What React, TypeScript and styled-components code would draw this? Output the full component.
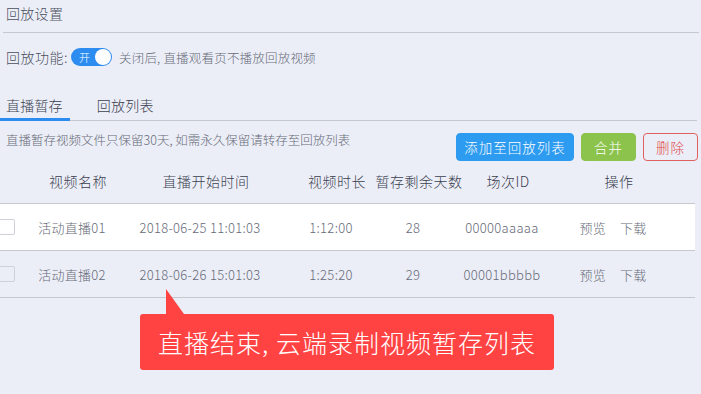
import React from 'react';
import styled, { createGlobalStyle } from 'styled-components';

type Video = {
	id: string;
	name: string;
	start: string;
	duration: string;
	daysLeft: number;
	highlighted: boolean;
};

const videos: Video[] = [
	{ id: '00000aaaaa', name: '活动直播01', start: '2018-06-25 11:01:03', duration: '1:12:00', daysLeft: 28, highlighted: true },
	{ id: '00001bbbbb', name: '活动直播02', start: '2018-06-26 15:01:03', duration: '1:25:20', daysLeft: 29, highlighted: false },
];

const columns = ['视频名称', '直播开始时间', '视频时长', '暂存剩余天数', '场次ID', '操作'];

const App: React.FC = () => {
	return (
		<Page>
			<GlobalStyle />
			<Header>
				<Title>回放设置</Title>
			</Header>
			<SwitchRow>
				<SwitchLabel>回放功能:</SwitchLabel>
				<Switch>
					<SwitchText>开</SwitchText>
					<Knob />
				</Switch>
				<SwitchHint>关闭后, 直播观看页不播放回放视频</SwitchHint>
			</SwitchRow>
			<Tabs>
				<Tab active>直播暂存</Tab>
				<Tab>回放列表</Tab>
			</Tabs>
			<Toolbar>
				<Note>直播暂存视频文件只保留30天, 如需永久保留请转存至回放列表</Note>
				<Actions>
					<Button kind="primary" width={118}>添加至回放列表</Button>
					<Button kind="success" width={55}>合并</Button>
					<Button kind="danger" width={55}>删除</Button>
				</Actions>
			</Toolbar>
			<Table>
				<HeadRow>
					<span />
					{columns.map((c) => (
						<HeadCell key={c}>{c}</HeadCell>
					))}
				</HeadRow>
				{videos.map((v) => (
					<BodyRow key={v.id} highlighted={v.highlighted}>
						<CheckCell>
							<Checkbox />
						</CheckCell>
						<Cell>{v.name}</Cell>
						<Cell>{v.start}</Cell>
						<Cell>{v.duration}</Cell>
						<Cell>{v.daysLeft}</Cell>
						<Cell>{v.id}</Cell>
						<Cell>
							<OpLink>预览</OpLink>
							<OpLink>下载</OpLink>
						</Cell>
					</BodyRow>
				))}
			</Table>
			<Callout>
				<CalloutText>直播结束, 云端录制视频暂存列表</CalloutText>
			</Callout>
		</Page>
	);
};

export default App;

const GlobalStyle = createGlobalStyle`
	html, body {
		margin: 0;
		padding: 0;
		background: #eceef7;
	}
	body {
		font-family: "Noto Sans CJK SC", "Noto Sans", sans-serif;
		font-weight: 300;
	}
`;

const Page = styled.div`
	position: relative;
	width: 701px;
	height: 394px;
	overflow: hidden;
	background: #eceef7;
	color: #4a5060;
`;

const Header = styled.div`
	margin: 0 2px 0 3px;
	padding: 3px 0 0 3px;
	height: 29px;
	border-bottom: 1px solid #c6c8ce;
`;

const Title = styled.div`
	font-size: 14px;
	line-height: 20px;
	letter-spacing: 0.3px;
	color: #4a5060;
`;

const SwitchRow = styled.div`
	display: flex;
	align-items: center;
	margin-top: 15px;
	padding-left: 6px;
	height: 18px;
`;

const SwitchLabel = styled.span`
	font-size: 14px;
	letter-spacing: 0.5px;
	color: #4a5060;
	margin-right: 3px;
`;

const Switch = styled.div`
	display: flex;
	align-items: center;
	justify-content: space-between;
	width: 41px;
	height: 18px;
	box-sizing: border-box;
	padding: 0 1px 0 8px;
	border-radius: 9px;
	background: #2d8cf0;
`;

const SwitchText = styled.span`
	font-size: 11px;
	color: #fff;
	line-height: 18px;
`;

const Knob = styled.span`
	width: 16px;
	height: 16px;
	border-radius: 50%;
	background: #fff;
`;

const SwitchHint = styled.span`
	margin-left: 7px;
	font-size: 12.5px;
	letter-spacing: 0.2px;
	color: #666b78;
`;

const Tabs = styled.div`
	display: flex;
	gap: 21px;
	margin: 29px 4px 0 0;
	border-bottom: 1px solid #c6c8ce;
`;

const Tab = styled.div<{ active?: boolean }>`
	padding: 0 7px 3px 6px;
	margin-bottom: -1px;
	font-size: 14px;
	line-height: 20px;
	letter-spacing: 0.2px;
	color: #3a4050;
	border-bottom: 3px solid ${(p) => (p.active ? '#2d8cf0' : 'transparent')};
`;

const Toolbar = styled.div`
	display: flex;
	align-items: flex-start;
	justify-content: space-between;
	margin-top: 12px;
	padding: 0 3px 0 6px;
`;

const Note = styled.div`
	font-size: 12.5px;
	line-height: 14px;
	color: #666b78;
`;

const Actions = styled.div`
	display: flex;
	gap: 7px;
`;

const buttonColors = {
	primary: { bg: '#2d9bf0', border: '#2d9bf0', color: '#fff' },
	success: { bg: '#8cc34d', border: '#8cc34d', color: '#fff' },
	danger: { bg: 'transparent', border: '#e06060', color: '#e04848' },
};

const Button = styled.button<{ kind: keyof typeof buttonColors; width: number }>`
	width: ${(p) => p.width}px;
	height: 28px;
	padding: 0;
	border-radius: 4px;
	border: 1px solid ${(p) => buttonColors[p.kind].border};
	background: ${(p) => buttonColors[p.kind].bg};
	color: ${(p) => buttonColors[p.kind].color};
	font-family: "Noto Sans CJK SC", "Noto Sans", sans-serif;
	font-weight: 300;
	font-size: 13.5px;
	letter-spacing: 1px;
`;

const Table = styled.div`
	margin-right: 6px;
`;

const grid = `
	display: grid;
	grid-template-columns: 20px 104px 152px 110px 54px 124px 98px 1fr;
	align-items: center;
`;

const HeadRow = styled.div`
	${grid};
	height: 43px;
	box-sizing: border-box;
	padding: 0 0 2px 6px;
	border-bottom: 1px solid #c6c8ce;
`;

const HeadCell = styled.div`
	display: flex;
	justify-content: center;
	white-space: nowrap;
	font-size: 14px;
	letter-spacing: 0.5px;
	color: #3a4050;
`;

const BodyRow = styled.div<{ highlighted: boolean }>`
	${grid};
	height: 47px;
	box-sizing: border-box;
	border-bottom: 1px solid #c6c8ce;
	background: ${(p) => (p.highlighted ? '#fff' : 'transparent')};
`;

const CheckCell = styled.div`
	display: flex;
	align-items: center;
`;

const Checkbox = styled.span`
	width: 16px;
	height: 16px;
	box-sizing: border-box;
	margin-left: -1px;
	border: 1px solid #cfd1d8;
	border-radius: 2px;
	background: transparent;
`;

const Cell = styled.div`
	display: flex;
	justify-content: center;
	gap: 14px;
	white-space: nowrap;
	font-size: 13px;
	letter-spacing: 0.3px;
	color: #666b78;
`;

const OpLink = styled.span`
	color: #666b78;
`;

const Callout = styled.div`
	position: absolute;
	left: 140px;
	top: 314px;
	width: 414px;
	height: 56px;
	display: flex;
	align-items: center;
	justify-content: center;
	border-radius: 3px;
	background: #ff4343;
	&::before {
		content: '';
		position: absolute;
		left: 26px;
		top: -25px;
		border-left: 0 solid transparent;
		border-right: 18px solid transparent;
		border-bottom: 25px solid #ff4343;
	}
`;

const CalloutText = styled.span`
	color: #fff;
	font-size: 25px;
	letter-spacing: 1px;
`;
